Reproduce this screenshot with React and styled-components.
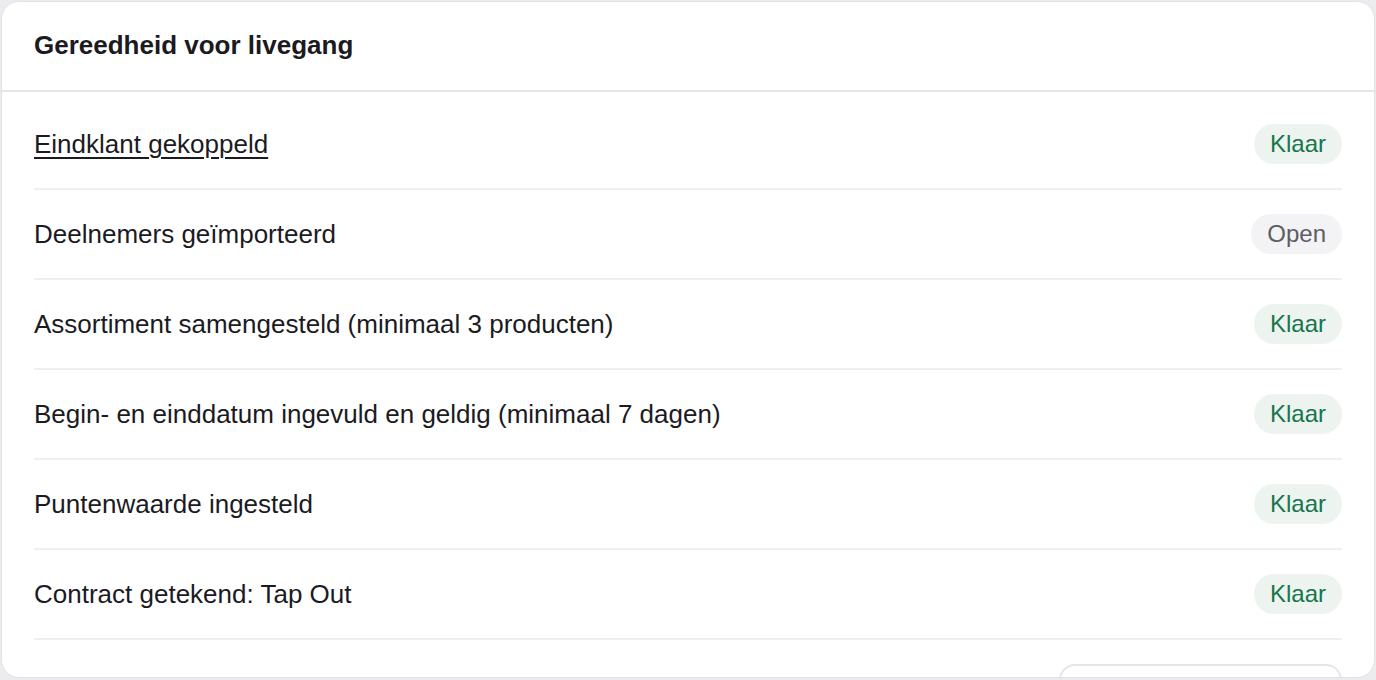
import React from 'react';
import styled, { createGlobalStyle } from 'styled-components';

const GlobalStyle = createGlobalStyle`
    html, body {
        margin: 0;
        padding: 0;
        background: #ececef;
        font-family: "Liberation Sans", Arial, sans-serif;
    }
`;

const Page = styled.div`
    padding: 1px;
`;

const Card = styled.section`
    height: 677px;
    box-sizing: border-box;
    background: #ffffff;
    border: 1px solid #e2e2e6;
    border-radius: 18px;
    overflow: hidden;
    display: flex;
    flex-direction: column;
    & > * {
        flex-shrink: 0;
    }
`;

const Header = styled.header`
    height: 90px;
    box-sizing: border-box;
    display: flex;
    align-items: center;
    padding: 0 32px 2px;
    border-bottom: 2px solid #e6e6ea;
`;

const Title = styled.h2`
    margin: 0;
    font-size: 26px;
    font-weight: 700;
    color: #1b1b1f;
`;

const List = styled.ul`
    list-style: none;
    margin: 0;
    padding: 8px 32px 0;
`;

const Row = styled.li`
    height: 90px;
    box-sizing: border-box;
    display: flex;
    align-items: center;
    justify-content: space-between;
    border-bottom: 2px solid #efeff2;
`;

const Label = styled.span`
    font-size: 26px;
    color: #1b1b1f;
    text-decoration: ${p => (p.$link ? 'underline' : 'none')};
    text-underline-offset: 4px;
    text-decoration-thickness: 2px;
`;

const Badge = styled.span`
    font-size: 24px;
    line-height: 40px;
    padding: 0 16px;
    border-radius: 999px;
    background: ${p => (p.$done ? '#edf4f0' : '#f3f3f5')};
    color: ${p => (p.$done ? '#17764c' : '#5d5d65')};
`;

const Footer = styled.div`
    display: flex;
    justify-content: flex-end;
    padding: 24px 32px 0;
`;

const Button = styled.button`
    width: 283px;
    height: 52px;
    background: #ffffff;
    border: 2px solid #e6e6ea;
    border-radius: 16px;
`;

const items = [
    { label: 'Eindklant gekoppeld', done: true, link: true },
    { label: 'Deelnemers geïmporteerd', done: false },
    { label: 'Assortiment samengesteld (minimaal 3 producten)', done: true },
    { label: 'Begin- en einddatum ingevuld en geldig (minimaal 7 dagen)', done: true },
    { label: 'Puntenwaarde ingesteld', done: true },
    { label: 'Contract getekend: Tap Out', done: true },
];

export default function App() {
    return (
        <>
            <GlobalStyle />
            <Page>
                <Card>
                    <Header>
                        <Title>Gereedheid voor livegang</Title>
                    </Header>
                    <List>
                        {items.map(item => (
                            <Row key={item.label}>
                                <Label $link={item.link}>{item.label}</Label>
                                <Badge $done={item.done}>{item.done ? 'Klaar' : 'Open'}</Badge>
                            </Row>
                        ))}
                    </List>
                    <Footer>
                        <Button aria-label="Live zetten" />
                    </Footer>
                </Card>
            </Page>
        </>
    );
}
